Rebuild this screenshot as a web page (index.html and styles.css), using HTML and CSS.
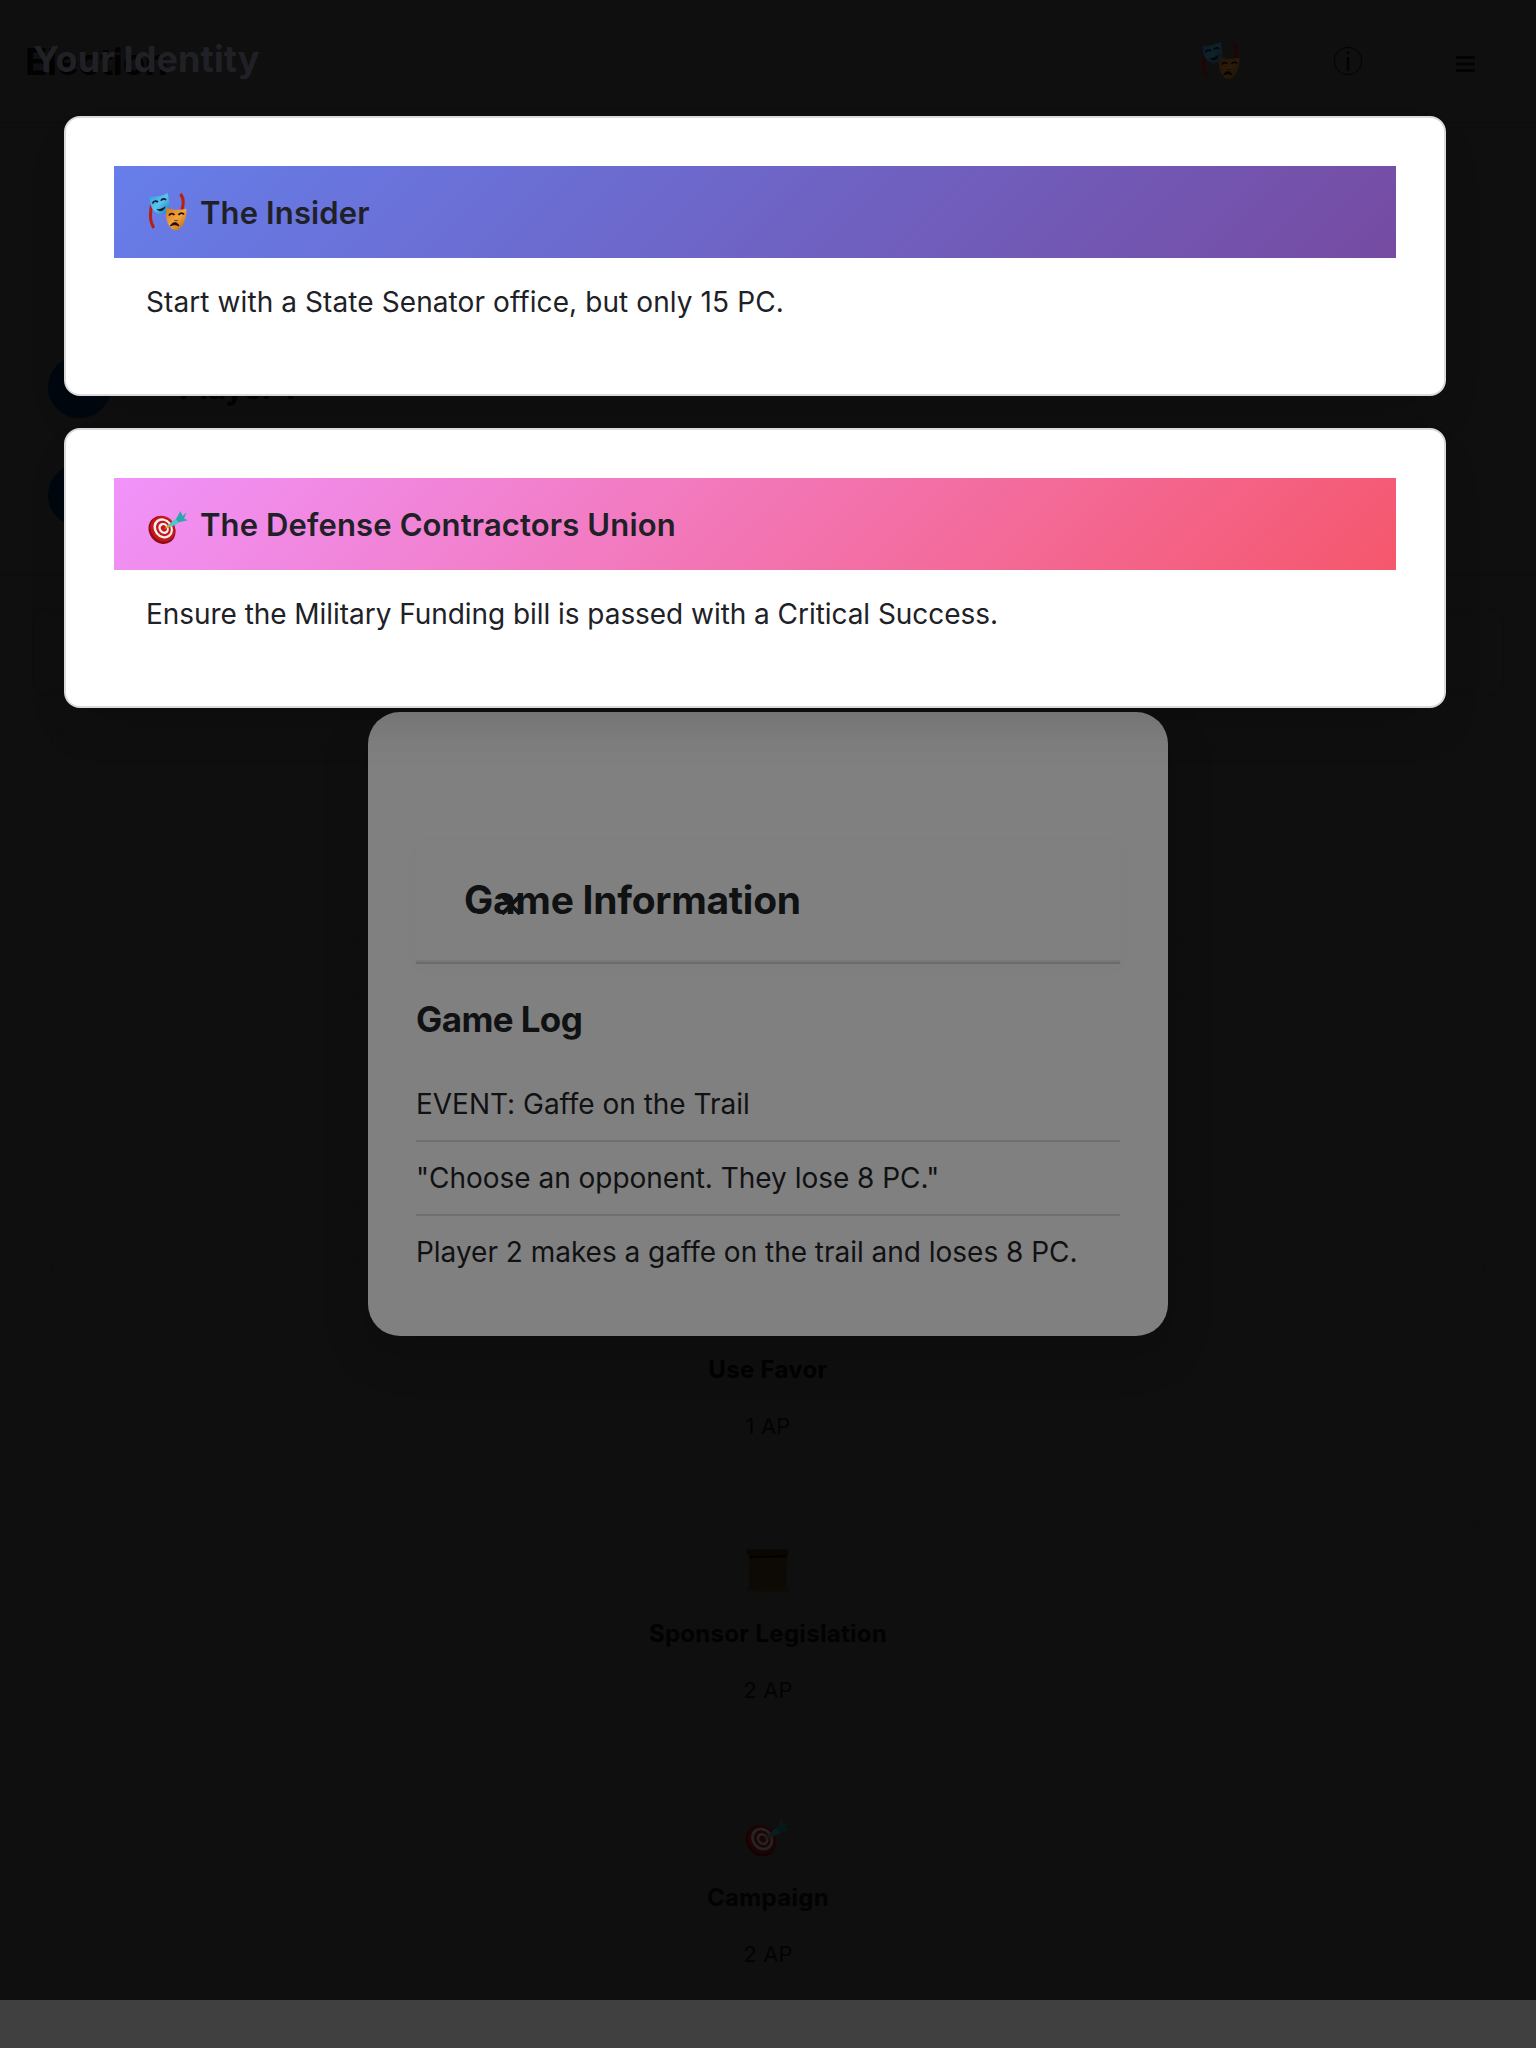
FILE: index.html
```html
<!DOCTYPE html>
<html lang="en">
<head>
<meta charset="utf-8">
<title>Election</title>
<link rel="stylesheet" href="styles.css">
</head>
<body>
<svg class="defs" width="0" height="0" aria-hidden="true">
  <defs>
    <linearGradient id="blue" x1="0" y1="0" x2="1" y2="1"><stop offset="0" stop-color="#2f9bd8"/><stop offset=".5" stop-color="#5cc3f2"/><stop offset="1" stop-color="#1a78b5"/></linearGradient>
    <linearGradient id="gold" x1="0" y1="0" x2="1" y2="1"><stop offset="0" stop-color="#d9751f"/><stop offset=".5" stop-color="#f2a540"/><stop offset="1" stop-color="#b95a14"/></linearGradient>
    <symbol id="masks" viewBox="0 0 40 40">
      <path d="M3.500 13c-.8 5-1.500 10-.7 15 .4 2.500 1.400 5 2.900 8" fill="none" stroke="#b81f0e" stroke-width="3"/>
      <path d="M32.500 2c2.300 3 3 6 2.700 9-.1 3-.6 5-1.300 7" fill="none" stroke="#b81f0e" stroke-width="3"/>
      <path d="M1.500 4.500c5 .8 13.500-.5 18-3.500 1.500 6 3.500 14 .5 18.500-2.500 3-6.500 4-10.500 2C4 19 1.500 12 1.500 4.500z" fill="url(#blue)"/>
      <path d="M4.500 11.500c1-2.500 3.500-3 5.500-1.500M13 8.800c1-2.500 3.500-2.500 5-.8" fill="none" stroke="#0e1d28" stroke-width="1.700"/>
      <path d="M8.500 17c3 .5 6.500-.5 9-3-.5 5-6 7-9 3z" fill="#0e1d28"/>
      <path d="M18.500 16c5 2 14 2.300 20 .8.200 8-2 16-7 20.200-3 2-6.500 1.500-9-1.500C18 30.500 17.500 23 18.500 16z" fill="url(#gold)"/>
      <path d="M21 23.500c1-2.500 4-2.500 5.500-.5M30.500 23c1.500-2.500 4-2.500 5.500-.5" fill="none" stroke="#1f1006" stroke-width="1.800"/>
      <path d="M22.500 34c1.500-4.500 7-4.500 8.500 0-2.500-1.700-6-1.700-8.500 0z" fill="#1f1006" stroke="#1f1006"/>
      <path d="M26 28c1 1 3 1 4 0" fill="none" stroke="#7a3c10"/>
    </symbol>
    <symbol id="target" viewBox="0 0 40 34">
      <ellipse cx="14" cy="20" rx="12.800" ry="14.600" transform="rotate(-38 14 20)" fill="#8d0d12"/>
      <ellipse cx="14.800" cy="18.700" rx="12" ry="13.400" transform="rotate(-38 14.800 18.700)" fill="#c4161b"/>
      <ellipse cx="15.200" cy="18.400" rx="9.200" ry="10.700" transform="rotate(-38 15.200 18.400)" fill="#f6f0ee"/>
      <ellipse cx="15.400" cy="18.400" rx="6.900" ry="8.200" transform="rotate(-38 15.400 18.400)" fill="#c4161b"/>
      <ellipse cx="15.600" cy="18.400" rx="4.900" ry="5.800" transform="rotate(-38 15.600 18.400)" fill="#f6f0ee"/>
      <ellipse cx="15.800" cy="18.400" rx="2.800" ry="3.300" transform="rotate(-38 15.800 18.400)" fill="#c4161b"/>
      <path d="M16 19l5-5 2 2.500z" fill="#e0a12a"/>
      <path d="M20.500 14.500l8.500-6.500 3 4-9 5z" fill="#48c9cf"/>
      <path d="M28 9L32.500 1l2 5 4-3.500-2.500 6 4 1.800-9.500 2z" fill="#2ba6ac"/>
    </symbol>
    <symbol id="scroll" viewBox="0 0 44 46">
      <path d="M3 6h38l-1 33 2 4H1l2-5z" fill="#a87a3a"/>
      <path d="M1 1.500h41c1.500 2 .5 5-1 6.500L3 7.500C0 7 0 3 1 1.500z" fill="#8a5a2a"/>
      <path d="M3 8l38-1-1 2.500L4 10z" fill="#1a0d04"/>
      <path d="M4 16h34M4 22h34M4 28h34M4 34h34" stroke="#8f642c"/>
      <path d="M1 43c14 1.500 28 1 41 1l1.500-4-3.500-1-37 2.500z" fill="#c89a50"/>
    </symbol>
  </defs>
</svg>

<main class="game">
  <header class="topbar">
    <h1 class="topbar-title">Election</h1>
    <nav class="topbar-nav">
      <svg class="nav-masks" viewBox="0 0 40 40"><use href="#masks"/></svg>
      <svg class="nav-info" viewBox="0 0 30 30"><circle cx="15" cy="15" r="13.700"/><path d="M15 11v13.500M15 5.500v2.500"/></svg>
      <svg class="nav-menu" viewBox="0 0 20 16"><path d="M0 1.400h19M0 7.900h19M0 14.400h19"/></svg>
    </nav>
  </header>
  <section class="players">
    <div class="player"><span class="avatar">P</span><span class="player-name">Player 1</span></div>
    <div class="player"><span class="avatar">P</span></div>
  </section>
  <div class="phase"></div>
  <section class="actions">
    <div class="action"></div>
    <div class="action"></div>
    <div class="action">
      <div class="action-icon"></div>
      <div class="action-name">Use Favor</div>
      <div class="action-cost">1 AP</div>
    </div>
    <div class="action">
      <div class="action-icon"><svg class="icon-scroll" viewBox="0 0 44 46"><use href="#scroll"/></svg></div>
      <div class="action-name">Sponsor Legislation</div>
      <div class="action-cost">2 AP</div>
    </div>
    <div class="action">
      <div class="action-icon"><svg class="icon-target" viewBox="0 0 40 34"><use href="#target"/></svg></div>
      <div class="action-name">Campaign</div>
      <div class="action-cost">2 AP</div>
    </div>
  </section>
  <footer class="home-strip"></footer>
</main>

<div class="info-layer">
  <section class="info">
    <header class="info-header">
      <h2 class="info-title">Game Information</h2>
      <svg class="info-close" viewBox="0 0 20 20"><path d="M1 1l18 18M19 1L1 19"/></svg>
    </header>
    <h3 class="log-title">Game Log</h3>
    <ul class="log">
      <li>EVENT: Gaffe on the Trail</li>
      <li>"Choose an opponent. They lose 8 PC."</li>
      <li>Player 2 makes a gaffe on the trail and loses 8 PC.</li>
    </ul>
  </section>
</div>

<div class="identity-layer">
  <h2 class="identity-title">Your Identity</h2>
  <div class="cards">
    <article class="card">
      <header class="card-header archetype"><svg class="card-masks" viewBox="0 0 40 40"><use href="#masks"/></svg><span class="card-name">The Insider</span></header>
      <p class="card-text archetype-text">Start with a State Senator office, but only 15 PC.</p>
    </article>
    <article class="card">
      <header class="card-header mission"><svg class="card-target" viewBox="0 0 40 34"><use href="#target"/></svg><span class="card-name">The Defense Contractors Union</span></header>
      <p class="card-text">Ensure the Military Funding bill is passed with a Critical Success.</p>
    </article>
  </div>
</div>
</body>
</html>
```
FILE: styles.css
```css
* { box-sizing: border-box; }

body {
  margin: 0;
  width: 1536px;
  height: 2048px;
  position: relative;
  overflow: hidden;
  background: #0f0f0f;
  color: #202126;
  font-family: Inter, "Liberation Sans", sans-serif;
}

h1, h2, h3, p, ul { margin: 0; padding: 0; }
svg { display: block; flex: none; }
.defs { position: absolute; }

/* Board */
.game { height: 2048px; display: flex; flex-direction: column; color: #020202; }

.topbar {
  height: 123px;
  padding: 0 60px 0 25px;
  display: flex;
  align-items: center;
  justify-content: space-between;
  border-bottom: 1px solid #0c0c0c;
}
.topbar-title { font-size: 37px; font-weight: 700; letter-spacing: -0.4px; }
.topbar-nav { display: flex; align-items: center; }
.nav-masks { width: 40px; height: 40px; filter: brightness(.17); margin-right: 92px; }
.nav-info { width: 30px; height: 30px; margin-right: 93px; }
.nav-info circle { fill: none; stroke: #020202; stroke-width: 1; }
.nav-info path { stroke: #020202; stroke-width: 2.300; }
.nav-menu { width: 20px; height: 16px; margin-top: 6px; }
.nav-menu path { stroke: #020202; stroke-width: 2.500; }

.players { height: 452px; padding: 233px 48px 0; border-bottom: 1px solid #0c0c0c; }
.player { height: 62px; margin-bottom: 46px; display: flex; align-items: center; gap: 68px; }
.avatar {
  width: 63px; height: 62px;
  border-radius: 50%;
  background: #00070f;
  display: flex; align-items: center; justify-content: center;
  font-size: 30px; font-weight: 700;
}
.player-name { font-size: 32px; font-weight: 700; letter-spacing: -0.5px; }

.phase { flex: none; height: 88px; margin: 33px 32px; border: 1px solid #0d0d0d; border-radius: 16px; }

.actions { padding: 0 50px; display: grid; grid-auto-rows: 215px; gap: 49px; flex: none; }
.action {
  border: 1px solid #0e0e0e;
  border-radius: 16px;
  display: flex; flex-direction: column; align-items: center;
}
.action-icon { height: 98px; display: flex; align-items: center; }
.icon-scroll { width: 44px; height: 46px; filter: brightness(.075); }
.icon-target { width: 45px; height: 39px; filter: brightness(.15); margin: 5px 2px 0 0; }
.action-name { height: 28px; line-height: 28px; font-size: 24px; font-weight: 700; letter-spacing: .3px; }
.action-cost { margin-top: 27px; height: 30px; line-height: 30px; font-size: 22px; letter-spacing: .2px; color: #030303; }

.home-strip { flex: none; height: 48px; background: #404040; }

/* Information dialog */
.info-layer { position: absolute; inset: 0; display: flex; justify-content: center; align-items: flex-start; padding-top: 712px; }
.info {
  width: 800px; height: 624px;
  padding: 128px 48px 48px;
  border-radius: 32px;
  background: #808080;
  color: #101113;
  box-shadow: 0 16px 48px rgba(0, 0, 0, .2);
}
.info-header {
  position: relative;
  height: 124px;
  padding: 0 48px 4px;
  display: flex; align-items: center;
  border-bottom: 2px solid #6b6b6b;
  box-shadow: inset 0 -2px 0 #787878, 0 4px 16px rgba(0, 0, 0, .02);
}
.info-title { font-size: 39px; font-weight: 700; letter-spacing: -0.28px; }
.info-close { position: absolute; left: 85px; top: 55px; width: 20px; height: 20px; }
.info-close path { stroke: #101113; stroke-width: 4; }
.log-title { height: 104px; line-height: 110px; font-size: 35px; font-weight: 700; letter-spacing: -0.6px; }
.log { list-style: none; font-size: 28px; letter-spacing: -0.02px; }
.log li { height: 74px; line-height: 72px; border-bottom: 2px solid #707070; white-space: nowrap; }
.log li:last-child { border-bottom: 0; }

/* Identity overlay */
.identity-layer { position: absolute; inset: 0; padding: 0 90px 0 64px; }
.identity-title { height: 116px; line-height: 118px; margin-left: -31px; font-size: 36px; font-weight: 700; letter-spacing: 0.1px; }
.cards { display: flex; flex-direction: column; gap: 32px; }
.card {
  height: 280px;
  padding: 48px;
  border: 2px solid #d9d9de;
  border-radius: 16px;
  background: #fff;
  box-shadow: 0 24px 48px -12px rgba(0, 0, 0, .15);
}
.card-header { height: 92px; padding: 0 34px; display: flex; align-items: center; gap: 12px; }
.archetype { background: linear-gradient(135deg, #667eea 0%, #764ba2 100%); }
.mission { background: linear-gradient(135deg, #f093fb 0%, #f5576c 100%); }
.card-masks { width: 40px; height: 40px; }
.card-target { width: 40px; height: 34px; margin-top: 6px; }
.card-name { font-size: 31px; font-weight: 600; letter-spacing: 0.13px; }
.card-text { height: 88px; line-height: 88px; padding-left: 32px; font-size: 28px; letter-spacing: -0.05px; white-space: nowrap; }
.archetype-text { letter-spacing: 0.09px; }
```
